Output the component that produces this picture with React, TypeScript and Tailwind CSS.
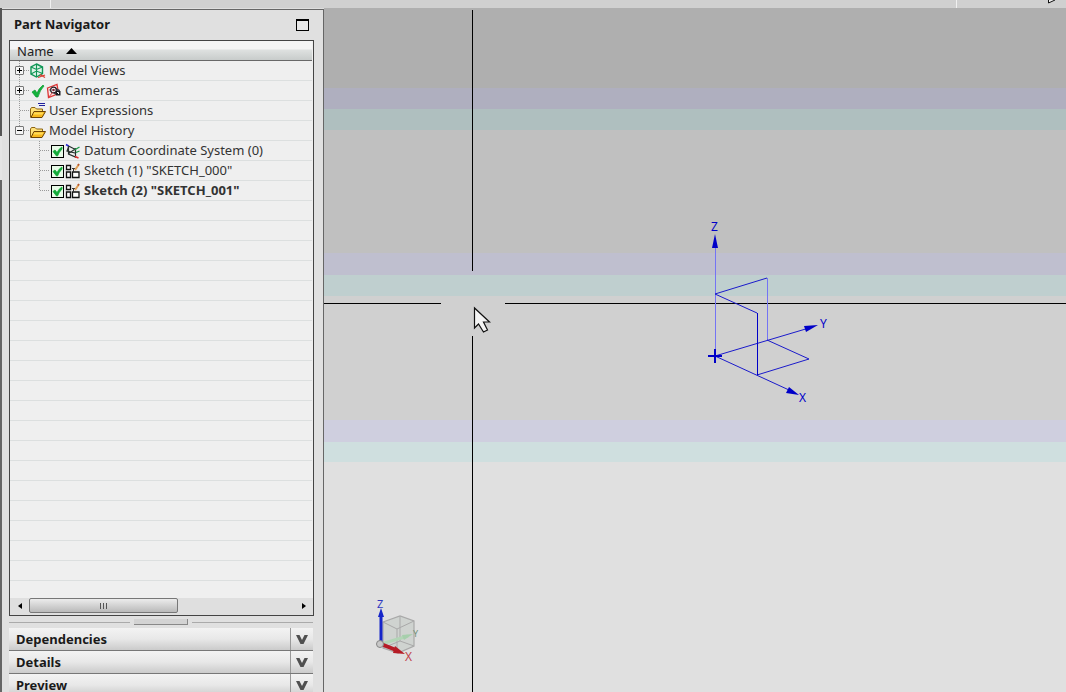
import { useState } from 'react'
import type { ReactNode } from 'react'

interface FeatureNode {
  id: string
  label: string
  icon: ReactNode
  current?: boolean
}

const BAND_STYLES = [
  'grow-[80] bg-[#afafaf]',
  'grow-[21] bg-[#afafbf]',
  'grow-[21] bg-[#afbfbf]',
  'grow-[123] bg-[#c0c0c0]',
  'grow-[22] bg-[#bfbfcf]',
  'grow-[21] bg-[#bfcfcf]',
  'grow-[124] bg-[#d0d0d0]',
  'grow-[22] bg-[#cfcfdf]',
  'grow-[20] bg-[#cfdfdf]',
  'grow-[230] bg-[#e0e0e0]',
]

function ModelViewsIcon() {
  return (
    <svg className="h-4 w-4" viewBox="0 0 16 16" fill="none">
      <path d="M6.5 1l6 3v6.500l-6 3.500L1 11V4z" fill="#dff3e8" />
      <path d="M6.500 1l6 3v6.500l-6 3.500L1 11V4z" stroke="#0f9655" strokeWidth="1.400" />
      <path d="M1 4l5.500 2.500L12.500 4M6.500 6.500V14M6.500 1v5M1 11l5.500-3 6 2.500" stroke="#0f9655" strokeWidth="1.100" />
      <path d="M8 14.500l7-2.500M10 11.500l5 3" stroke="#dc3b30" strokeWidth="1.300" />
    </svg>
  )
}

function GreenCheckIcon() {
  return (
    <svg className="h-4 w-4" viewBox="0 0 16 16">
      <path d="M2 9l3-2 2 3q2-5 6-8l1 1q-4 4-6 11H6z" fill="#14b23c" stroke="#0c9a30" strokeWidth=".7" />
    </svg>
  )
}

function CameraIcon() {
  return (
    <svg className="h-4 w-4" viewBox="0 0 16 16" fill="none">
      <path d="M1.500 5L11 1.500l1.500 9L2.500 14.500z" fill="#fae6e6" stroke="#dc3434" strokeWidth="1.300" />
      <path d="M3 7q4-5 9-1l2 1v5h-4z" fill="#47404a" />
      <circle cx="7.500" cy="7" r="2.800" fill="#fff" stroke="#2a2028" strokeWidth="1.200" />
      <circle cx="7.500" cy="7" r="1.300" fill="#7c2434" />
      <path d="M10 8h4.500v4.500H10z" fill="#17171c" />
      <path d="M11 9.500h1.500v1.500" stroke="#fff" />
      <path d="M2.500 14.500l4-5" stroke="#dc3434" />
    </svg>
  )
}

function FolderIcon({ expression = false }: { expression?: boolean }) {
  return (
    <svg className="h-4 w-4 overflow-visible" viewBox="0 0 16 16">
      <path d="M.500 14.500V6L1.500 4.500H5L6.500 6h6v3" fill="#ffe27a" stroke="#8c6414" />
      <path d="M1 14.500L4 8.500h11.500l-3.500 6z" fill="#f7b81e" stroke="#6b4306" />
      <path d="M4 9.500h9.500l-1 2h-9z" fill="#ffdc58" />
      {expression && <path d="M8 .500h7M9 2.500h6" stroke="#20209c" strokeWidth="1" />}
    </svg>
  )
}

function DatumIcon() {
  return (
    <svg className="h-4 w-4" viewBox="0 0 16 16" fill="none">
      <path d="M3.500 3v8l7 3V6.500zM3.500 10.500l7.500-5M3.500 4L2 8l8 2" stroke="#26302c" strokeWidth="1.200" />
      <path d="M1 1.500l2.500 1.500" stroke="#2828cc" strokeWidth="1.600" />
      <path d="M9.500 7L14.500 4M11 9.500l3.500-1.500" stroke="#1b9b46" strokeWidth="1.300" />
      <path d="M10 13.500l3.500 1.500" stroke="#df3030" strokeWidth="1.600" />
    </svg>
  )
}

function SketchIcon() {
  return (
    <svg className="h-4 w-4" viewBox="0 0 16 16" fill="none">
      <path d="M1.500 2.500h4v4h-4zM1.500 9h4v5.500h-4zM7.500 9h6.500v5.500H7.500z" fill="#fff" stroke="#111" strokeWidth="1.300" />
      <path d="M7 5.500h3M8.500 5v4" stroke="#333" />
      <path d="M10 7l3.500-5" stroke="#e0a057" strokeWidth="2" />
      <path d="M13 2.500l1-1.500" stroke="#b5552c" strokeWidth="1.800" />
    </svg>
  )
}

const features: FeatureNode[] = [
  { id: 'datum', label: 'Datum Coordinate System (0)', icon: <DatumIcon /> },
  { id: 'sketch-1', label: 'Sketch (1) "SKETCH_000"', icon: <SketchIcon /> },
  { id: 'sketch-2', label: 'Sketch (2) "SKETCH_001"', icon: <SketchIcon />, current: true },
]

// Dotted tree lines, with an optional +/- box on top
function Branch({ open, last = false, onToggle, label }: { open?: boolean; last?: boolean; onToggle?: () => void; label: string }) {
  return (
    <div className="relative flex h-5 w-5 shrink-0 items-start pt-[5px]">
      <svg className="absolute inset-0 h-5 w-5" viewBox="0 0 20 20" stroke="#9a9a9a" strokeDasharray="1 1">
        <path d={last ? 'M9.500 0v10' : 'M9.500 0v20'} />
        <path d="M10 9.500h9" />
      </svg>
      {onToggle && (
        <button
          type="button"
          aria-label={label}
          aria-expanded={open}
          onClick={onToggle}
          className="relative ml-[5px] flex h-[9px] w-[9px] items-center justify-center rounded-[1px] border border-[#777] bg-[#f4f4f4]"
        >
          <span className="absolute h-px w-[5px] bg-black" />
          {!open && <span className="absolute h-[5px] w-px bg-black" />}
        </button>
      )}
    </div>
  )
}

function RowLabel({ children, bold = false }: { children: ReactNode; bold?: boolean }) {
  return (
    <span className={bold ? 'ml-[3px] h-5 leading-[18px] font-bold whitespace-nowrap' : 'ml-[3px] h-5 leading-[18px] whitespace-nowrap'}>
      {children}
    </span>
  )
}

function FeatureRow({ node, last }: { node: FeatureNode; last: boolean }) {
  const [shown, setShown] = useState(true)
  return (
    <li className="flex h-5 items-center">
      <svg className="h-5 w-10 shrink-0" viewBox="0 0 40 20" stroke="#9a9a9a" strokeDasharray="1 1">
        <path d={last ? 'M29.500 0v10' : 'M29.500 0v20'} />
        <path d="M30 9.500h9" />
      </svg>
      <label className="flex items-center">
        <span className="relative ml-px flex h-[13px] w-[13px]">
          <input
            type="checkbox"
            checked={shown}
            onChange={(e) => setShown(e.target.checked)}
            className="h-full w-full appearance-none border border-black bg-[#e9fbe9]"
          />
          {shown && (
            <svg className="pointer-events-none absolute inset-0 h-full w-full" viewBox="0 0 13 13">
              <path d="M2 6.500l2-1.500 2 2.500q2-4 5-5.500v2q-3 3-4.500 7h-1z" fill="#12a939" stroke="#12a939" strokeWidth=".8" />
            </svg>
          )}
        </span>
        <span className="ml-px">{node.icon}</span>
        <RowLabel bold={node.current}>{node.label}</RowLabel>
      </label>
    </li>
  )
}

function PartTree() {
  const [viewsOpen, setViewsOpen] = useState(false)
  const [camerasOpen, setCamerasOpen] = useState(false)
  const [historyOpen, setHistoryOpen] = useState(true)

  return (
    <div className="flex min-h-0 flex-1 flex-col border border-[#444] bg-[#efefef]">
      <button
        type="button"
        className="mr-px flex h-5 shrink-0 items-center border-b border-[#686868] bg-linear-to-b from-[#f5f5f5] from-40% via-[#dde0df] via-50% to-[#c8cccb] pl-[7px] text-[#222]"
      >
        Name
        <svg className="ml-3 h-[6px] w-[11px]" viewBox="0 0 11 6">
          <path d="M5.500 0L11 6H0z" fill="#000" />
        </svg>
      </button>
      <div className="min-h-0 flex-1 overflow-hidden pr-px">
        <ul className="h-[520px] bg-[repeating-linear-gradient(#efefef_0px_19px,#dcdfdf_19px_20px)] text-[#333]">
          <li className="flex h-5 items-center">
            <Branch label="Expand Model Views" open={viewsOpen} onToggle={() => setViewsOpen(!viewsOpen)} />
            <ModelViewsIcon />
            <RowLabel>Model Views</RowLabel>
          </li>
          <li className="flex h-5 items-center">
            <Branch label="Expand Cameras" open={camerasOpen} onToggle={() => setCamerasOpen(!camerasOpen)} />
            <GreenCheckIcon />
            <CameraIcon />
            <RowLabel>Cameras</RowLabel>
          </li>
          <li className="flex h-5 items-center">
            <Branch label="User Expressions" />
            <FolderIcon expression />
            <RowLabel>User Expressions</RowLabel>
          </li>
          <li>
            <div className="flex h-5 items-center">
              <Branch label="Collapse Model History" last open={historyOpen} onToggle={() => setHistoryOpen(!historyOpen)} />
              <FolderIcon />
              <RowLabel>Model History</RowLabel>
            </div>
            {historyOpen && (
              <ul>
                {features.map((node, i) => (
                  <FeatureRow key={node.id} node={node} last={i === features.length - 1} />
                ))}
              </ul>
            )}
          </li>
        </ul>
      </div>
      <div className="flex h-[17px] shrink-0 bg-[#dfdfdf]">
        <button type="button" aria-label="Scroll left" className="flex h-[15px] w-[19px] items-center justify-center">
          <svg className="h-[6px] w-1" viewBox="0 0 4 6">
            <path d="M4 0v6L0 3z" />
          </svg>
        </button>
        <div className="flex flex-1">
          <div className="flex h-[15px] w-[149px] items-center justify-center gap-[2px] rounded-[2px] border border-[#777] bg-linear-to-b from-[#ececec] to-[#bababa]">
            <span className="h-[6px] w-px bg-[#555]" />
            <span className="h-[6px] w-px bg-[#555]" />
            <span className="h-[6px] w-px bg-[#555]" />
          </div>
        </div>
        <button type="button" aria-label="Scroll right" className="flex h-[15px] w-[19px] items-center justify-center">
          <svg className="h-[6px] w-1" viewBox="0 0 4 6">
            <path d="M0 0v6l4-3z" />
          </svg>
        </button>
      </div>
    </div>
  )
}

function SectionHeader({ title }: { title: string }) {
  return (
    <button
      type="button"
      className="flex h-[23px] w-full shrink-0 items-center border-b border-[#777] bg-linear-to-b from-[#f3f3f3] via-[#e8e8e8] via-50% to-[#cbcbcb] text-left text-[13px] leading-none font-bold text-[#1a1a1a]"
    >
      <span className="flex-1 pl-[7px]">{title}</span>
      <span className="flex h-full w-[23px] items-center justify-center border-l border-[#999]">
        <svg className="h-[9px] w-3" viewBox="0 0 12 9">
          <path d="M0 0h3.500L6 5l2.500-5H12L7.500 9h-3z" fill="#505050" />
        </svg>
      </span>
    </button>
  )
}

function PartNavigator() {
  return (
    <aside className="mt-px flex w-[322px] shrink-0 flex-col border-t border-r border-[#666] bg-[#e0e0e0] pr-[9px] pl-[7px]">
      <div className="flex h-[30px] shrink-0 items-center justify-between pr-[5px] pl-[5px]">
        <h1 className="h-5 text-[13px] leading-[18px] font-bold text-[#1a1a1a]">Part Navigator</h1>
        <button type="button" aria-label="Maximize" className="h-3 w-[13px] border border-t-2 border-black bg-[#e8e8e8]" />
      </div>
      <PartTree />
      <div className="flex h-3 shrink-0 items-center gap-1 pr-px">
        <span className="h-px flex-1 bg-[#aaa]" />
        <span className="h-[6px] w-[54px] border-r border-b border-[#888] bg-[#d3d3d3]" />
        <span className="h-px flex-1 bg-[#aaa]" />
      </div>
      <div className="flex h-16 shrink-0 flex-col overflow-hidden pr-px">
        <SectionHeader title="Dependencies" />
        <SectionHeader title="Details" />
        <SectionHeader title="Preview" />
      </div>
    </aside>
  )
}

function GraphicsWindow() {
  return (
    <main className="relative flex min-w-0 flex-1 flex-col overflow-hidden">
      {BAND_STYLES.map((band) => (
        <div key={band} className={`basis-0 ${band}`} />
      ))}
      <svg className="absolute inset-0 h-full w-full" fontSize="12">
        {/* crosshair */}
        <g fill="#000">
          <rect x="148" y="2" width="1" height="261" />
          <rect x="148" y="328" width="1" height="100%" />
          <rect x="0" y="295" width="117" height="1" />
          <rect x="181" y="295" width="100%" height="1" />
        </g>

        {/* datum coordinate system */}
        <g fill="none" stroke="#1a1acb" strokeWidth="1">
          <path d="M391.500 236V348M443.500 270V332" stroke="#7474f4" />
          <path d="M391 286L443 270M391 286L433 305M391 348L485 320M391 348L465 382M443 332L485 351L433 367" />
          <path d="M433.500 305V367" stroke="#0000c8" />
          <path d="M384 348h14M391 341v14" stroke="#0000c8" strokeWidth="2" />
        </g>
        <g fill="#0000c8">
          <path d="M391 226l3 14h-6z" />
          <path d="M494 317l-12 7-2-6z" />
          <path d="M475 387l-13-2 3-6z" />
          <text x="387" y="223">Z</text>
          <text x="496" y="320">Y</text>
          <text x="475" y="394">X</text>
        </g>

        {/* mouse cursor */}
        <path
          d="M150.500 300v20l4-4 5 8 4-2-4-8h6z"
          fill="#f4f4f4"
          stroke="#111"
          strokeWidth="1.200"
        />

        {/* view triad */}
        <path d="M59 614l17-6 14 5v25l-16 7-15-5z" fill="#cfd3d0" stroke="#a9a9a9" strokeWidth="1.200" />
        <path d="M59 614l14 7 17-8M73 621v24M76 608v25l14 5M76 633l-17 7" fill="none" stroke="#a9a9a9" />
        <path d="M57 636l27-8" stroke="#b2d5b6" strokeWidth="3" />
        <path d="M78 627l11-1-9 6z" fill="#a6cfac" />
        <path d="M57 636V606" stroke="#1525c9" strokeWidth="3" />
        <path d="M57 600l3 9h-6z" fill="#1525c9" />
        <path d="M57 636l15 6" stroke="#b61c26" strokeWidth="4" />
        <path d="M71 638l10 8-12-1z" fill="#b61c26" />
        <circle cx="56" cy="636" r="3.500" fill="#c8c8c8" stroke="#858585" />
        <text x="53" y="600" fontSize="11" fill="#3038c0">Z</text>
        <text x="89" y="629" fontSize="9" fill="#739078">Y</text>
        <text x="81" y="653" fontSize="12" fill="#c0454b">X</text>
      </svg>
    </main>
  )
}

export default function App() {
  return (
    <div className="flex h-screen flex-col overflow-hidden bg-[#dedede] font-['Noto_Sans',sans-serif] text-[13px] leading-5">
      <header className="flex h-2 shrink-0 justify-between overflow-hidden bg-[#d0d0d0] pr-[10px] pl-[50px]">
        <span className="h-full w-px bg-[#f0f0f0]" />
        <div className="flex gap-[91px]">
          <span className="h-full w-px bg-[#f0f0f0]" />
          <svg className="h-1 w-2" viewBox="0 0 8 4">
            <path d="M.5 0v3L7 0" fill="#eee" stroke="#111" />
          </svg>
        </div>
      </header>
      <div className="flex min-h-0 flex-1">
        <div className="flex w-[2px] shrink-0 flex-col">
          <div className="h-32 bg-[#555]" />
          <div className="h-11 bg-[#e4e4e4]" />
          <div className="flex-1 bg-[#666]" />
        </div>
        <PartNavigator />
        <GraphicsWindow />
      </div>
    </div>
  )
}
